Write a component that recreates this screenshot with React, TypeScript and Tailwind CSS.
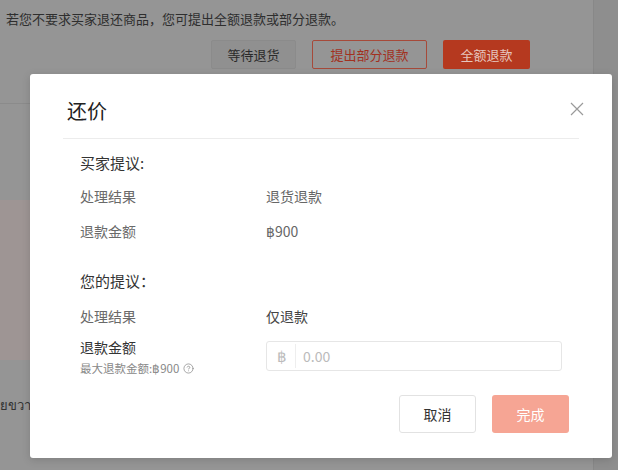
import React from "react";
import { CircleHelp } from "lucide-react";

const cjk = "font-['Noto_Sans_CJK_SC',sans-serif]";

interface InfoRowProps {
  label: string;
  value: string;
  valueClass?: string;
}

const InfoRow: React.FC<InfoRowProps> = ({ label, value, valueClass = "text-[#666]" }) => (
  <div className="flex h-[35px] items-center text-[14px] leading-[20px]">
    <span className="w-[186px] text-[#6a6a6a]">{label}</span>
    <span className={valueClass}>{value}</span>
  </div>
);

const CounterOfferModal: React.FC = () => {
  const [amount, setAmount] = React.useState("");

  return (
    <div className="absolute left-[30px] top-[74px] h-[384px] w-[582px] rounded-[3px] bg-white shadow-[0_2px_8px_rgba(0,0,0,0.15)]">
      {/* header */}
      <div className="mx-[33px] h-[65px] border-b border-[#ececec] pl-[4px] pt-[23px]">
        <h2 className="text-[20px] leading-[28px] text-[#222]">还价</h2>
      </div>
      <button
        type="button"
        className="absolute right-[28px] top-[28px] flex h-[14px] w-[14px] items-center justify-center"
      >
        <svg width="14" height="14" viewBox="0 0 14 14" fill="none">
          <path d="M1 1L13 13M13 1L1 13" stroke="#9a9a9a" strokeWidth="1.2" />
        </svg>
      </button>

      {/* body */}
      <div className="pl-[50px]">
        <div className="mt-[13px] text-[15px] leading-[22px] text-[#333]">买家提议:</div>
        <div className="mt-[4px]">
          <InfoRow label="处理结果" value="退货退款" />
          <InfoRow label="退款金额" value="฿900" />
        </div>

        <div className="mt-[22px] text-[15px] leading-[22px] text-[#333]">您的提议：</div>
        <div className="mt-[6px]">
          <InfoRow label="处理结果" value="仅退款" valueClass="text-[#444]" />
        </div>

        <div className="mt-[4px] flex items-start">
          <div className="w-[186px]">
            <div className="text-[14px] leading-[20px] text-[#333]">退款金额</div>
            <div className="mt-[2px] flex items-center gap-[4px] text-[11.5px] leading-[18px] text-[#888]">
              <span>最大退款金额:฿900</span>
              <CircleHelp size={11} strokeWidth={1.6} className="text-[#888]" />
            </div>
          </div>
          <div className="mt-[4px] flex h-[30px] w-[296px] items-center rounded-[3px] border border-[#e6e6e6]">
            <span className="w-[28px] pl-[1px] text-center text-[15px] text-[#bbb]">฿</span>
            <span className="h-[24px] w-px bg-[#eeeeee]" />
            <input
              value={amount}
              onChange={(e) => setAmount(e.target.value)}
              placeholder="0.00"
              className="h-full flex-1 bg-transparent pl-[7px] text-[14px] text-[#333] outline-none placeholder:text-[#bbb]"
            />
          </div>
        </div>
      </div>

      {/* footer */}
      <div className="mt-[18px] flex justify-end gap-[16px] pr-[43px]">
        <button
          type="button"
          className="h-[38px] w-[77px] rounded-[3px] border border-[#e2e2e2] bg-white text-[14px] text-[#333]"
        >
          取消
        </button>
        <button
          type="button"
          disabled
          className="h-[38px] w-[77px] rounded-[3px] bg-[#f6a594] text-[14px] text-white"
        >
          完成
        </button>
      </div>
    </div>
  );
};

export default function App() {
  return (
    <div className={`relative h-[470px] w-[618px] overflow-hidden bg-[#8e8e8e] ${cjk}`}>
      {/* dimmed page behind the dialog */}
      <div className="h-full w-[594px] border-r border-[#888] bg-[#959595]">
        <div className="h-[104px] border-b border-[#8b8b8b] pt-[10px]">
          <p className="pl-[6px] text-[13px] leading-[18px] text-[#2e2e2e]">
            若您不要求买家退还商品，您可提出全额退款或部分退款。
          </p>
          <div className="mt-[12px] flex justify-end gap-[16px] pr-[63px]">
            <button
              type="button"
              className="h-[29px] w-[85px] rounded-[2px] border border-[#8b8b8b] bg-[#909090] text-[13px] text-[#2a2a2a]"
            >
              等待退货
            </button>
            <button
              type="button"
              className="h-[29px] w-[115px] rounded-[2px] border border-[#a64a3a] text-[13px] text-[#a2311f]"
            >
              提出部分退款
            </button>
            <button
              type="button"
              className="h-[29px] w-[87px] rounded-[2px] bg-[#b5391f] text-[13px] text-[#e6c6be]"
            >
              全额退款
            </button>
          </div>
        </div>
        <div className="mt-[96px] h-[160px] bg-[#9e9594]" />
        <div className="mt-[36px] text-[13px] leading-[18px] text-[#333]">ยขวา</div>
      </div>

      <CounterOfferModal />
    </div>
  );
}
